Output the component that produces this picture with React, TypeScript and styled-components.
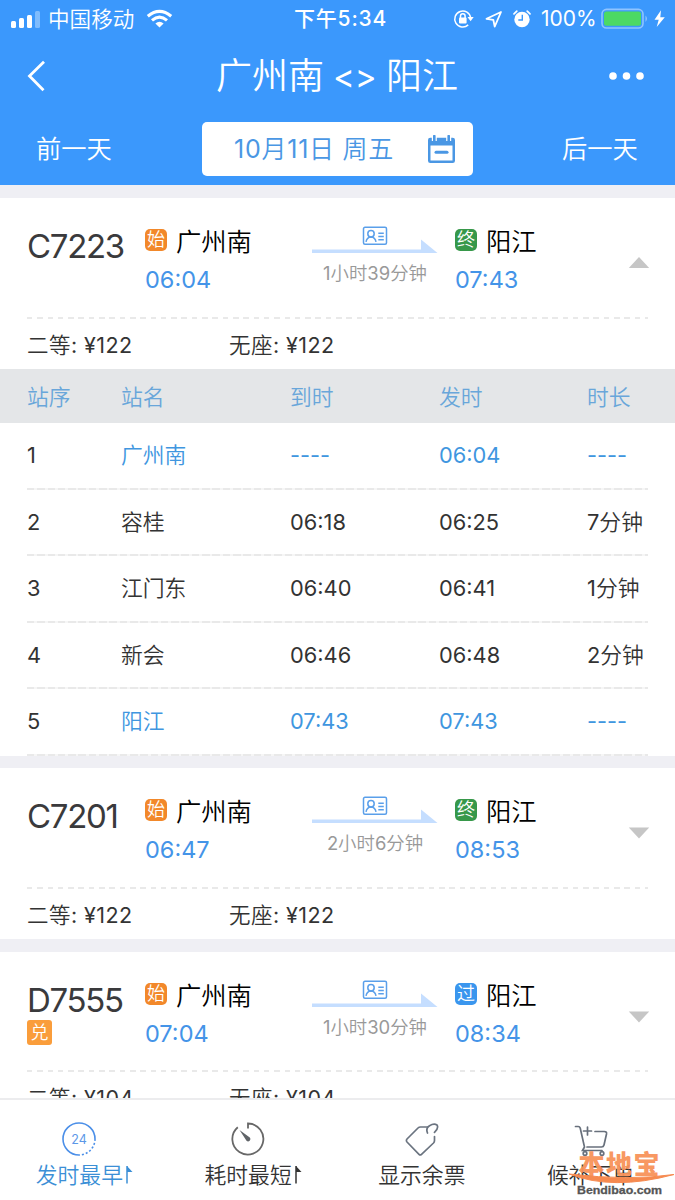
import React from "react";
import styled, { createGlobalStyle } from "styled-components";

const GlobalStyle = createGlobalStyle`
  * { box-sizing: border-box; }
  body {
    margin: 0;
    background: #efeff4;
    font-family: Inter, "Noto Sans CJK SC", sans-serif;
    font-weight: 350;
    color: #333;
  }
`;

const Screen = styled.div`
  width: 675px;
  height: 1200px;
  overflow: hidden;
  display: flex;
  flex-direction: column;
  background: #efeff4;
`;

const Latin = styled.span`
  font-weight: 400;
`;

const Header = styled.header`
  flex: none;
  height: 185px;
  background: #3b98fc;
  color: #fff;
`;

const StatusBar = styled.div`
  height: 37px;
  display: grid;
  grid-template-columns: 274px 1fr 222px;
  padding-left: 10px;
  font-size: 21px;
  line-height: 38px;
  white-space: nowrap;
`;

const StatusGroup = styled.div`
  height: 37px;
  display: flex;
  align-items: center;
  svg { display: block; flex: none; }
`;

const StatusIcons = styled(StatusGroup)`
  svg:nth-of-type(2), svg:nth-of-type(3) { margin-left: 9.5px; }
`;

const Carrier = styled.span`
  margin: 0 12px 0 7px;
  font-size: 21.6px;
`;

const Clock = styled.div`
  padding-left: 10px;
  font-size: 21px;
  font-weight: 500;
  letter-spacing: 0.8px;
`;

const Percent = styled.span`
  width: 69px;
  padding-left: 9px;
  font-size: 21px;
  font-weight: 400;
`;

const NavBar = styled.div`
  height: 85px;
  display: grid;
  grid-template-columns: 216px 1fr 67px;
  grid-template-rows: 78px;
  align-items: center;
  svg { display: block; }
`;

const Title = styled.h1`
  margin: 0;
  display: flex;
  gap: 10px;
  font-size: 36px;
  font-weight: 350;
  line-height: 80px;
  white-space: nowrap;
`;

const Between = styled.span`
  width: 42px;
  margin-left: -1px;
  margin-right: 1px;
  font-size: 33px;
  font-weight: 400;
`;

const DateBar = styled.div`
  height: 54px;
  display: grid;
  grid-template-columns: 166px 271px 1fr;
  padding-left: 36px;
  font-size: 25.3px;
  line-height: 54px;
`;

const DateBox = styled.div`
  display: flex;
  align-items: center;
  justify-content: space-between;
  padding: 0 17px 0 32px;
  background: #fff;
  border-radius: 5px;
  color: #4a97e4;
  font-size: 25px;
  letter-spacing: 0.75px;
  white-space: nowrap;
`;

const NextDay = styled.div`
  padding-left: 89px;
`;

const List = styled.main`
  flex: 1;
  min-height: 0;
  overflow: hidden;
  padding-top: 13px;
`;

const Card = styled.section`
  background: #fff;
  margin-bottom: 12.5px;
`;

const Summary = styled.div`
  height: 118.5px;
  display: grid;
  grid-template-columns: 118px 167px 143px 173px 1fr;
  padding-left: 27px;
`;

const TrainNo = styled.div`
  padding-top: 27px;
  font-size: 33px;
  font-weight: 400;
  line-height: 42px;
  letter-spacing: -1.3px;
  color: #3a3a3c;
`;

const ExchangeTag = styled.div`
  width: 25px;
  height: 25px;
  margin-top: -1px;
  border-radius: 3px;
  background: #fa9d3b;
  color: #fff;
  font-size: 18px;
  font-weight: 350;
  line-height: 25px;
  letter-spacing: 0;
  text-align: center;
`;

const Stop = styled.div`
  padding-top: 28px;
`;

const StopName = styled.div`
  display: flex;
  align-items: center;
  gap: 9px;
  height: 32px;
  font-size: 25.3px;
  line-height: 32px;
  color: #000;
`;

const Badge = styled.span<{ $tone: string }>`
  width: 22px;
  height: 22px;
  margin-top: -4px;
  border-radius: 5px;
  background: ${(p) => p.$tone};
  color: #fff;
  font-size: 18px;
  line-height: 22px;
  text-align: center;
`;

const StopTime = styled.div`
  padding-top: 7px;
  font-size: 23.5px;
  font-weight: 400;
  line-height: 30px;
  color: #4494e8;
`;

const Journey = styled.div`
  width: 126px;
  padding-top: 27px;
  text-align: center;
  svg { display: block; }
`;

const Duration = styled.div`
  font-size: 18.4px;
  line-height: 24px;
  margin-top: 7px;
  color: #999;
  white-space: nowrap;
`;

const Toggle = styled.div`
  padding-top: 59px;
  svg { display: block; }
`;

const Dashes = styled.div<{ $tight?: boolean }>`
  height: 2px;
  margin: 0 27px;
  background: repeating-linear-gradient(
    90deg,
    #e9e9e9 0 ${(p) => (p.$tight ? 7.5 : 5.5)}px,
    ${(p) => (p.$tight ? "#f6f6f6" : "#fff")} ${(p) => (p.$tight ? 7.5 : 5.5)}px 10.3px
  );
`;

const Prices = styled.div`
  height: 50.5px;
  display: grid;
  grid-template-columns: 202px 1fr;
  padding-left: 27px;
  font-size: 21.5px;
  line-height: 52px;
  letter-spacing: 0.45px;
`;

const TableHead = styled.div`
  height: 54px;
  display: grid;
  grid-template-columns: 94px 169px 149px 148px 1fr;
  padding-left: 27px;
  background: #e4e6e8;
  color: #69a6da;
  font-size: 21.8px;
  line-height: 56px;
`;

const TableRow = styled.div<{ $active?: boolean }>`
  height: 64.6px;
  display: grid;
  grid-template-columns: 94px 169px 149px 148px 1fr;
  padding-left: 27px;
  font-size: 21.8px;
  line-height: 64px;
  color: ${(p) => (p.$active ? "#4096df" : "#333")};
  white-space: nowrap;
`;

const Order = styled.span`
  font-weight: 400;
  color: #333;
`;

const TabBar = styled.nav`
  flex: none;
  height: 102px;
  display: grid;
  grid-template-columns: repeat(4, 1fr);
  background: #fff;
  border-top: 2px solid #ececee;
  position: relative;
`;

const Tab = styled.div<{ $active?: boolean; $sortable?: boolean }>`
  display: flex;
  flex-direction: column;
  align-items: center;
  padding-top: 21px;
  font-size: 21.8px;
  line-height: 34px;
  white-space: nowrap;
  color: ${(p) => (p.$active ? "#3b8fd6" : "#333")};
  > svg { margin-right: ${(p) => (p.$sortable ? 10 : 0)}px; }
`;

const TabLabel = styled.div`
  display: flex;
  align-items: center;
  gap: 2px;
  margin-top: 1px;
`;

const Watermark = styled.div`
  position: absolute;
  left: 568px;
  top: 50px;
  width: 107px;
  height: 50px;
`;

const SignalIcon = () => (
  <svg width="31" height="20" viewBox="0 0 31 20" fill="#fff">
    <rect x="1" y="12" width="5" height="7" rx="1.5" />
    <rect x="9" y="9" width="5" height="10" rx="1.5" />
    <rect x="17" y="6" width="5" height="13" rx="1.5" />
    <rect x="25" y="2" width="5" height="17" rx="1.5" opacity=".35" />
  </svg>
);

const WifiIcon = () => (
  <svg width="27" height="20" viewBox="0 0 27 20" fill="none" stroke="#fff">
    <path d="M1.8 7.2Q13.5-2.3 25.2 7.2" strokeWidth="3.2" />
    <path d="M6 11.4Q13.5 5 21 11.4" strokeWidth="3.1" />
    <path d="M9.4 14.4Q13.5 11.2 17.6 14.4L13.5 18.5Z" fill="#fff" stroke="none" />
  </svg>
);

const LockIcon = () => (
  <svg width="22" height="20" viewBox="0 0 22 20" fill="none" stroke="#fff" strokeWidth="1.5">
    <path d="M15.2 15.9A8 8 0 1 1 17.7 9" />
    <path d="M14.5 8h6.2l-3.1 4.2z" fill="#fff" stroke="none" />
    <rect x="6" y="8.5" width="7.6" height="6" rx="1" fill="#fff" stroke="none" />
    <path d="M7.5 9V7a2.3 2.3 0 0 1 4.6 0v2" />
  </svg>
);

const LocationIcon = () => (
  <svg width="18" height="18" viewBox="0 0 18 18" fill="none" stroke="#fff" strokeWidth="1.8" strokeLinejoin="round">
    <path d="M16 2 1.5 8.8 8.3 9.8 9.7 16.6Z" />
  </svg>
);

const AlarmIcon = () => (
  <svg width="20" height="20" viewBox="0 0 20 20" fill="none" stroke="#fff">
    <circle cx="10" cy="10.5" r="7.7" fill="#fff" stroke="none" />
    <path d="M2 4.8 4.8 2.2M18 4.8 15.2 2.2" strokeWidth="1.8" strokeLinecap="round" />
    <path d="M10.3 5.8v5.2H6.3" stroke="#3b98fc" strokeWidth="1.4" />
  </svg>
);

const BatteryIcon = () => (
  <svg width="67" height="22" viewBox="0 0 67 22" fill="none">
    <rect x="1" y="1.4" width="41" height="18.6" rx="4.5" stroke="#8fc4ff" strokeWidth="1.6" />
    <rect x="3" y="3.6" width="37" height="14.2" rx="2.5" fill="#4cd964" />
    <path d="M44.5 7.5v6.4q3-3.2 0-6.4" fill="#8fc4ff" />
    <path d="M60 2.2 53.5 11.8h4.2L55.7 19 63.8 9.2H59.3Z" fill="#fff" />
  </svg>
);

const BackIcon = () => (
  <svg width="50" height="34" viewBox="0 0 50 34" fill="none" stroke="#fff" strokeWidth="2.8">
    <path d="M44 2.8 29.5 17 43.5 31.2" />
  </svg>
);

const MoreIcon = () => (
  <svg width="38" height="10" viewBox="0 0 38 10" fill="#fff">
    <circle cx="5" cy="5" r="3.8" />
    <circle cx="18.5" cy="5" r="3.8" />
    <circle cx="32" cy="5" r="3.8" />
  </svg>
);

const CalendarIcon = () => (
  <svg width="29" height="29" viewBox="0 0 29 29">
    <path fillRule="evenodd" d="M1 5q0-2.3 2.3-2.3h22.4Q28 2.7 28 5v20.7q0 2.3-2.3 2.3H3.3Q1 28 1 25.7ZM3.5 10.5v15h22v-15Z" fill="#4a97e4" />
    <path d="M7.3 1v5M14.5 1v5M21.7 1v5" stroke="#fff" strokeWidth="5" />
    <path d="M7.3 1v6.3M21.7 1v6.3" stroke="#4a97e4" strokeWidth="2.6" strokeLinecap="round" />
    <path d="M12 5h5" stroke="#4a97e4" strokeWidth="4.5" />
    <path d="M9 17.3h11" stroke="#4a97e4" strokeWidth="3" strokeLinecap="round" />
  </svg>
);

const JourneyArrow = () => (
  <svg width="126" height="29" viewBox="0 0 126 29" fill="none">
    <g stroke="#5a9fea" strokeWidth="1.5">
      <rect x="51.5" y="2.3" width="23" height="17" rx="1.5" />
      <circle cx="59" cy="8.7" r="3.2" />
      <path d="M54 16.8q.8-4.7 5-4.9 4.2.2 5 4.9M66.3 8.2h5.500M66.3 11.5h5.500M66.3 14.8h5.500" />
    </g>
    <path d="M0 24.4h109V14.5L125.500 28H0Z" fill="#c5deff" />
  </svg>
);

const Triangle = ({ up }: { up?: boolean }) => (
  <svg width="22" height="12" viewBox="0 0 22 12" fill="#c6c6c6">
    <path d={up ? "M11 0 21.200 11H.8Z" : "M11 11.500 21.200.5H.8Z"} />
  </svg>
);

const Hours24Icon = () => (
  <svg width="34" height="36" viewBox="0 0 34 36" fill="none" stroke="#4b8fe8" strokeWidth="1.6">
    <path d="M17 34A16 16 0 1 1 33 18" />
    <path d="M33 18A16 16 0 0 1 17 34" strokeDasharray="2 2" />
    <text x="17" y="22.5" textAnchor="middle" fontSize="12.5" fontFamily="Inter, sans-serif" fontWeight="400" fill="#5c98e8" stroke="none">24</text>
  </svg>
);

const StopwatchIcon = () => (
  <svg width="34" height="36" viewBox="0 0 34 36" fill="none" stroke="#686868" strokeWidth="1.8">
    <path d="M6.8 6.2A15.5 15.5 0 1 0 17 2.5V7.5" />
    <path d="M8.5 9 18.8 16.5A2.3 2.3 0 0 1 15.5 19.7Z" fill="#606468" stroke="none" />
  </svg>
);

const TagIcon = () => (
  <svg width="34" height="36" viewBox="0 0 34 36" fill="none" stroke="#6b7480" strokeWidth="1.7" strokeLinejoin="round" strokeLinecap="round">
    <path d="M22.5 6H15.5Q14 6 13 7L2 18Q.8 19.5 2 21L14 33.3Q15.2 34.5 16.5 33.3L28.5 22Q29.500 21 29.500 19.500V15.500" />
    <path d="M22.5 12q-2-5 2-7.300 4.500-2.700 7.500-.7 2 3.300-2.500 7.400" />
  </svg>
);

const CartIcon = () => (
  <svg width="34" height="36" viewBox="0 0 34 36" fill="none" stroke="#68707c" strokeWidth="1.7" strokeLinecap="round">
    <path d="M1.5 5.5h2.7Q5.7 5.5 6.2 7L10.5 26L8.5 29.5H28" />
    <path d="M21 10.5h9.3Q33 10.5 32.5 13L30 24Q29.5 26 27.5 26H13M13.500 6v8M9.500 10h8" />
    <circle cx="11" cy="32.5" r="1.8" />
    <circle cx="28" cy="32.5" r="1.8" />
  </svg>
);

const SortFlag = () => (
  <svg width="8" height="22" viewBox="0 0 8 22">
    <path d="M2 2v17.5" stroke="currentColor" strokeWidth="1.5" />
    <path d="M2 2 7.5 8H2Z" fill="currentColor" />
  </svg>
);

const WatermarkLogo = () => (
  <svg width="107" height="50" viewBox="0 0 107 50">
    <text x="10.5" y="24" fontSize="26" fontWeight="900" fontFamily='"Noto Sans CJK SC", sans-serif' fill="#f8935a" textLength="81" opacity=".95">本地宝</text>
    <path d="M1 24Q45 41 106 24.5Q62 31 1 24Z" fill="#f68a50" stroke="#f68a50" strokeWidth="1" />
    <text x="9" y="43.5" fontSize="11.5" fontWeight="700" fontFamily='"Liberation Sans", sans-serif' fill="#555" stroke="#555" strokeWidth=".3" textLength="85" lengthAdjust="spacingAndGlyphs">Bendibao.com</text>
  </svg>
);

const ORANGE = "#f2882a";
const GREEN = "#37984a";
const BLUE = "#3a96ee";

/* Digits and Latin runs are set one weight heavier than the Chinese text. */
const Mixed = ({ text }: { text: string }) => (
  <span>
    {text.split(/([\d¥:%-]+)/).map((run, i) => (i % 2 ? <Latin key={i}>{run}</Latin> : run))}
  </span>
);

interface Train {
  no: string;
  exchange?: boolean;
  depart: string;
  arrive: string;
  duration: string;
  endMark: string;
  endTone: string;
  price: string;
  stops?: string[][];
}

const trains: Train[] = [
  {
    no: "C7223",
    depart: "06:04",
    arrive: "07:43",
    duration: "1小时39分钟",
    endMark: "终",
    endTone: GREEN,
    price: "¥122",
    stops: [
      ["1", "广州南", "----", "06:04", "----"],
      ["2", "容桂", "06:18", "06:25", "7分钟"],
      ["3", "江门东", "06:40", "06:41", "1分钟"],
      ["4", "新会", "06:46", "06:48", "2分钟"],
      ["5", "阳江", "07:43", "07:43", "----"],
    ],
  },
  { no: "C7201", depart: "06:47", arrive: "08:53", duration: "2小时6分钟", endMark: "终", endTone: GREEN, price: "¥122" },
  { no: "D7555", exchange: true, depart: "07:04", arrive: "08:34", duration: "1小时30分钟", endMark: "过", endTone: BLUE, price: "¥104" },
];

const TrainCard = ({ train }: { train: Train }) => (
  <Card>
    <Summary>
      <TrainNo>
        {train.no}
        {train.exchange && <ExchangeTag>兑</ExchangeTag>}
      </TrainNo>
      <Stop>
        <StopName><Badge $tone={ORANGE}>始</Badge>广州南</StopName>
        <StopTime>{train.depart}</StopTime>
      </Stop>
      <Journey>
        <JourneyArrow />
        <Duration><Mixed text={train.duration} /></Duration>
      </Journey>
      <Stop>
        <StopName><Badge $tone={train.endTone}>{train.endMark}</Badge>阳江</StopName>
        <StopTime>{train.arrive}</StopTime>
      </Stop>
      <Toggle><Triangle up={!!train.stops} /></Toggle>
    </Summary>
    <Dashes />
    <Prices>
      <Mixed text={`二等: ${train.price}`} />
      <Mixed text={`无座: ${train.price}`} />
    </Prices>
    {train.stops && (
      <>
        <TableHead>
          {["站序", "站名", "到时", "发时", "时长"].map((h) => <span key={h}>{h}</span>)}
        </TableHead>
        {train.stops.map(([order, ...cells], i, all) => (
          <React.Fragment key={order}>
            <TableRow $active={i === 0 || i === all.length - 1}>
              <Order>{order}</Order>
              {cells.map((c, j) => <Mixed key={j} text={c} />)}
            </TableRow>
            <Dashes $tight />
          </React.Fragment>
        ))}
      </>
    )}
  </Card>
);

export default function App() {
  return (
    <Screen>
      <GlobalStyle />
      <Header>
        <StatusBar>
          <StatusGroup>
            <SignalIcon />
            <Carrier>中国移动</Carrier>
            <WifiIcon />
          </StatusGroup>
          <Clock>下午5:34</Clock>
          <StatusIcons>
            <LockIcon />
            <LocationIcon />
            <AlarmIcon />
            <Percent>100%</Percent>
            <BatteryIcon />
          </StatusIcons>
        </StatusBar>
        <NavBar>
          <BackIcon />
          <Title><span>广州南</span><Between>&lt;&gt;</Between><span>阳江</span></Title>
          <MoreIcon />
        </NavBar>
        <DateBar>
          <span>前一天</span>
          <DateBox><Mixed text="10月11日 周五" /><CalendarIcon /></DateBox>
          <NextDay>后一天</NextDay>
        </DateBar>
      </Header>
      <List>
        {trains.map((t) => <TrainCard key={t.no} train={t} />)}
      </List>
      <TabBar>
        <Tab $active $sortable><Hours24Icon /><TabLabel>发时最早<SortFlag /></TabLabel></Tab>
        <Tab $sortable><StopwatchIcon /><TabLabel>耗时最短<SortFlag /></TabLabel></Tab>
        <Tab><TagIcon /><TabLabel>显示余票</TabLabel></Tab>
        <Tab><CartIcon /><TabLabel>候补下单</TabLabel></Tab>
        <Watermark><WatermarkLogo /></Watermark>
      </TabBar>
    </Screen>
  );
}
